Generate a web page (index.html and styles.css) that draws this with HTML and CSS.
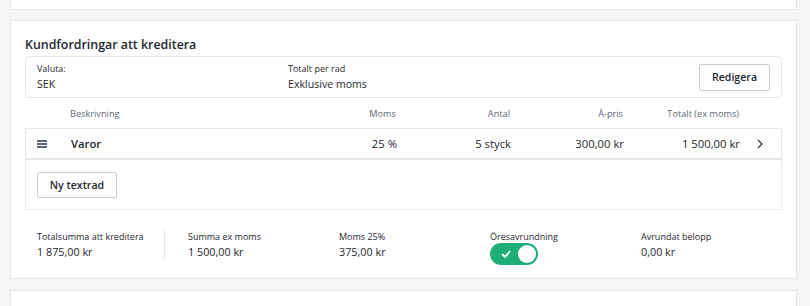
FILE: index.html
```
<!DOCTYPE html>
<html lang="sv">
    <head>
        <meta charset="UTF-8">
        <meta name="viewport" content="width=device-width, initial-scale=1.0">
        <title>Kreditering</title>
        <link rel="stylesheet" href="styles.css">
    </head>
    <body>
        <!-- Previous card (cut off) -->
        <div class="card card-top"></div>

        <!-- Main card -->
        <div class="card card-main">
            <h2 class="title">Kundfordringar att kreditera</h2>

            <!-- Settings -->
            <div class="settings">
                <div class="setting">
                    <div class="setting-label">Valuta:</div>
                    <div class="setting-value">SEK</div>
                </div>
                <div class="setting setting-wide">
                    <div class="setting-label">Totalt per rad</div>
                    <div class="setting-value">Exklusive moms</div>
                </div>
                <button class="btn btn-edit">Redigera</button>
            </div>

            <!-- Table head -->
            <div class="grid head">
                <div></div>
                <div>Beskrivning</div>
                <div class="num">Moms</div>
                <div class="num">Antal</div>
                <div class="num">À-pris</div>
                <div class="num">Totalt (ex moms)</div>
                <div></div>
            </div>

            <!-- Rows -->
            <div class="grid row">
                <div class="handle">
                    <svg width="10" height="8" viewBox="0 0 10 8"><path d="M0 1h10M0 4h10M0 7h10" stroke="#2b3540" stroke-width="1.5"/></svg>
                </div>
                <div class="desc">Varor</div>
                <div class="num">25 %</div>
                <div class="num">5 styck</div>
                <div class="num">300,00 kr</div>
                <div class="num">1 500,00 kr</div>
                <div class="chevron">
                    <svg width="6" height="10" viewBox="0 0 6 10"><path d="M1 1l4 4-4 4" fill="none" stroke="#2b3540" stroke-width="1.2"/></svg>
                </div>
            </div>

            <div class="add-area">
                <button class="btn btn-add">Ny textrad</button>
            </div>

            <!-- Summary -->
            <div class="summary">
                <div class="sum sum-first">
                    <div class="sum-label">Totalsumma att kreditera</div>
                    <div class="sum-value">1 875,00 kr</div>
                </div>
                <div class="sum">
                    <div class="sum-label">Summa ex moms</div>
                    <div class="sum-value">1 500,00 kr</div>
                </div>
                <div class="sum">
                    <div class="sum-label">Moms 25%</div>
                    <div class="sum-value">375,00 kr</div>
                </div>
                <div class="sum">
                    <div class="sum-label">Öresavrundning</div>
                    <div class="toggle">
                        <svg class="check" width="10" height="8" viewBox="0 0 10 8"><path d="M1 4l3 3 5-6" fill="none" stroke="#fff" stroke-width="1.8"/></svg>
                        <span class="knob"></span>
                    </div>
                </div>
                <div class="sum">
                    <div class="sum-label">Avrundat belopp</div>
                    <div class="sum-value">0,00 kr</div>
                </div>
            </div>
        </div>

        <!-- Next card (cut off) -->
        <div class="card card-bottom"></div>
    </body>
</html>
```

FILE: styles.css
```
* {
    box-sizing: border-box;
}

body {
    margin: 0;
    padding: 0 13px 0 10px;
    background-color: #f4f5f7;
    font-family: "Open Sans", "Liberation Sans", sans-serif;
    color: #1f2830;
}

.card {
    background-color: #fff;
    border: 1px solid #e4e6ea;
}

.card-top {
    height: 10px;
    border-top: none;
}

.card-main {
    margin-top: 10px;
    padding: 0 14px;
}

.card-bottom {
    margin-top: 11px;
    height: 30px;
}

.title {
    margin: 15px 0 3px 0;
    font-size: 12.4px;
    line-height: 17px;
    font-weight: 600;
}

.settings {
    display: flex;
    align-items: center;
    height: 42px;
    padding: 0 11px;
    border: 1px solid #e4e6ea;
    border-radius: 4px;
}

.setting {
    width: 251px;
}

.setting-wide {
    flex: 1;
}

.setting-label {
    font-size: 9px;
    line-height: 14px;
}

.setting-value {
    font-size: 10.6px;
    line-height: 16px;
}

.btn {
    height: 26px;
    padding: 0;
    background-color: #fff;
    border: 1px solid #c9cdd2;
    border-radius: 2px;
    font-family: inherit;
    font-size: 10.6px;
    font-weight: 600;
    color: #1f2830;
}

.btn-edit {
    width: 71px;
    height: 27px;
}

.btn-add {
    width: 80px;
}

.grid {
    display: grid;
    grid-template-columns: 45px 226px 100px 114px 113px 116px 44px;
    align-items: center;
}

.head {
    height: 30px;
    font-size: 9.2px;
    color: #5f6b78;
}

.num {
    text-align: right;
}

.row {
    height: 32px;
    border: 1px solid #e4e6ea;
    border-bottom-width: 2px;
    font-size: 11.3px;
}

.handle {
    display: flex;
    padding-left: 11px;
}

.desc {
    font-weight: 600;
}

.chevron {
    display: flex;
    padding-left: 17px;
}

.add-area {
    padding: 12px 11px 11px 11px;
    border: 1px dotted #d6d9dd;
    border-top: none;
}

.summary {
    display: flex;
    align-items: flex-start;
    padding: 20px 12px 18px 12px;
}

.sum {
    flex-shrink: 0;
    width: 151px;
    height: 30px;
}

.sum-first {
    width: 128px;
    margin-right: 23px;
    border-right: 1px solid #e4e6ea;
}

.sum-label {
    font-size: 9px;
    line-height: 13px;
}

.sum-value {
    font-size: 10.8px;
    line-height: 17px;
}

.toggle {
    position: relative;
    width: 48px;
    height: 22px;
    border-radius: 11px;
    background-color: #1fae78;
}

.check {
    position: absolute;
    left: 11px;
    top: 7px;
}

.knob {
    position: absolute;
    right: 2px;
    top: 2px;
    width: 18px;
    height: 18px;
    border-radius: 50%;
    background-color: #fff;
}
```
